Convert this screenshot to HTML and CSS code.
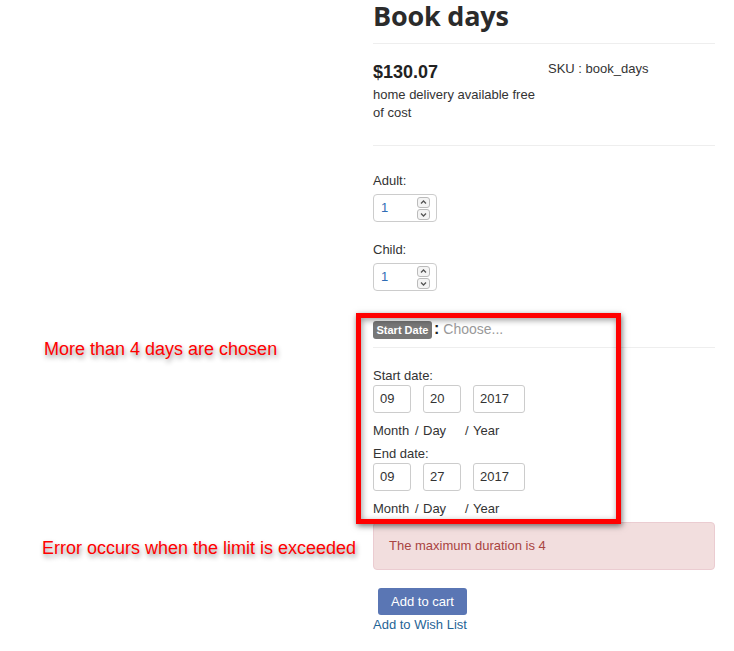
FILE: index.html
```html
<!DOCTYPE html>
<html>
<head>
<meta charset="utf-8">
<link rel="stylesheet" href="styles.css">
</head>
<body>
<div class="page">
  <p class="note note-days">More than 4 days are chosen</p>
  <p class="note note-error">Error occurs when the limit is exceeded</p>

  <main class="product">
    <h1 class="title">Book days</h1>
    <hr class="rule">
    <div class="summary">
      <div class="price-col">
        <div class="price">$130.07</div>
        <div class="delivery">home delivery available free of cost</div>
      </div>
      <div class="sku">SKU : book_days</div>
    </div>
    <hr class="rule rule-2">

    <div class="qty">
      <label class="label">Adult:</label>
      <div class="number">
        <span class="number-value">1</span>
        <span class="spin">
          <span class="spin-btn"><svg viewBox="0 0 13 11" width="13" height="11"><path d="M4 6.5 L6.5 4 L9 6.5" fill="none" stroke="#555" stroke-width="1.3"/></svg></span>
          <span class="spin-btn"><svg viewBox="0 0 13 11" width="13" height="11"><path d="M4 4.5 L6.5 7 L9 4.5" fill="none" stroke="#555" stroke-width="1.3"/></svg></span>
        </span>
      </div>
    </div>
    <div class="qty qty-child">
      <label class="label">Child:</label>
      <div class="number">
        <span class="number-value">1</span>
        <span class="spin">
          <span class="spin-btn"><svg viewBox="0 0 13 11" width="13" height="11"><path d="M4 6.5 L6.5 4 L9 6.5" fill="none" stroke="#555" stroke-width="1.3"/></svg></span>
          <span class="spin-btn"><svg viewBox="0 0 13 11" width="13" height="11"><path d="M4 4.5 L6.5 7 L9 4.5" fill="none" stroke="#555" stroke-width="1.3"/></svg></span>
        </span>
      </div>
    </div>

    <div class="choose-row">
      <span class="badge">Start Date</span><span class="colon">:</span><span class="choose">Choose...</span>
    </div>
    <hr class="rule rule-3">

    <div class="date-block">
      <label class="label">Start date:</label>
      <div class="date-inputs">
        <span class="date-box">09</span>
        <span class="date-box">20</span>
        <span class="date-box date-year">2017</span>
      </div>
      <div class="date-caption"><span class="cap-m">Month</span><span class="cap-s">/</span><span class="cap-d">Day</span><span class="cap-s">/</span><span>Year</span></div>
    </div>
    <div class="date-block date-end">
      <label class="label">End date:</label>
      <div class="date-inputs">
        <span class="date-box">09</span>
        <span class="date-box">27</span>
        <span class="date-box date-year">2017</span>
      </div>
      <div class="date-caption date-caption-end"><span class="cap-m">Month</span><span class="cap-s">/</span><span class="cap-d">Day</span><span class="cap-s">/</span><span>Year</span></div>
    </div>

    <div class="alert">The maximum duration is 4</div>

    <div class="actions">
      <button class="btn-cart">Add to cart</button>
      <a class="wish" href="#">Add to Wish List</a>
    </div>
  </main>

  <div class="highlight"></div>
</div>
</body>
</html>
```

FILE: styles.css
```css
* { box-sizing: border-box; }

html, body {
  margin: 0;
  padding: 0;
  background: #fff;
}

body {
  font-family: "Liberation Sans", Arial, sans-serif;
  font-size: 13px;
  line-height: 18px;
  color: #333;
}

.page {
  position: relative;
  width: 734px;
  height: 651px;
  display: grid;
  grid-template-columns: 373px 342px;
  overflow: hidden;
}

.product {
  grid-column: 2;
}

/* annotations */
.note {
  position: absolute;
  margin: 0;
  font-family: "Liberation Sans", Arial, sans-serif;
  font-size: 18px;
  line-height: 20px;
  color: #ff0000;
  text-shadow: 1px 3px 5px rgba(0, 0, 0, 0.45);
  white-space: nowrap;
}
.note-days { left: 44px; top: 339px; }
.note-error { left: 42px; top: 538px; }

.highlight {
  position: absolute;
  left: 356px;
  top: 313px;
  width: 265px;
  height: 211px;
  border: 5px solid #ff0000;
  box-shadow: 1px 2px 6px rgba(0, 0, 0, 0.55), inset 1px 2px 6px rgba(0, 0, 0, 0.4);
  pointer-events: none;
}

/* header */
.title {
  margin: 0;
  font-family: "Open Sans", "Liberation Sans", sans-serif;
  font-weight: 700;
  font-size: 27px;
  line-height: 32px;
  color: #2b2b2b;
  letter-spacing: -0.2px;
}

.rule {
  margin: 11px 0 0;
  border: 0;
  border-top: 1px solid #eee;
  height: 0;
}

.summary {
  display: grid;
  grid-template-columns: 175px 1fr;
  margin-top: 15px;
}

.price-col { padding-top: 3px; }

.price {
  font-weight: 700;
  font-size: 18px;
  line-height: 20px;
  color: #222;
}

.delivery {
  margin-top: 4px;
  line-height: 17.5px;
  width: 170px;
}

.sku { padding-top: 1px; }

.rule-2 { margin-top: 24px; }

/* quantities */
.qty { margin-top: 26px; }
.qty-child { margin-top: 19px; }

.label {
  display: block;
  line-height: 18px;
}

.number {
  margin-top: 4px;
  width: 64px;
  height: 28px;
  border: 1px solid #ccc;
  border-radius: 4px;
  display: flex;
  align-items: center;
  justify-content: space-between;
  padding: 0 6px 0 7px;
}

.number-value {
  color: #2f6db5;
  font-size: 13px;
}

.spin {
  display: flex;
  flex-direction: column;
  gap: 1px;
}

.spin-btn {
  display: block;
  width: 13px;
  height: 11px;
  border: 1px solid #bbb;
  border-radius: 3px;
  background: #f4f4f4;
}
.spin-btn svg {
  display: block;
  margin: -1px;
}

/* start date choose row */
.choose-row {
  margin-top: 30px;
  display: flex;
  align-items: center;
  height: 18px;
}

.badge {
  display: inline-block;
  background: #777;
  color: #fff;
  font-weight: 700;
  font-size: 11px;
  line-height: 18px;
  height: 18px;
  padding: 0 3.5px;
  border-radius: 3px;
}

.colon {
  color: #222;
  font-size: 16px;
  font-weight: 700;
  margin: -3px 4px 0 2px;
}

.choose {
  color: #999;
  font-size: 14px;
  margin-top: -2px;
}

.rule-3 { margin-top: 8px; }

/* dates */
.date-block { margin-top: 19px; }
.date-end { margin-top: 5px; }

.date-inputs {
  display: flex;
  gap: 12px;
}

.date-box {
  display: block;
  width: 38px;
  height: 28px;
  border: 1px solid #ccc;
  border-radius: 3px;
  padding-left: 6px;
  line-height: 26px;
  font-size: 13px;
  color: #333;
}
.date-year { width: 52px; }

.date-caption {
  display: flex;
  margin-top: 9px;
}
.date-caption-end { margin-top: 9px; }
.cap-m { width: 42px; }
.cap-d { width: 42px; }
.cap-s { width: 8px; }

/* alert */
.alert {
  margin-top: 4px;
  height: 48px;
  padding: 14px 15px;
  background: #f2dede;
  border: 1px solid #ebccd1;
  border-radius: 4px;
  color: #a94442;
}

.actions {
  margin-top: 18px;
  display: flex;
  flex-direction: column;
  align-items: flex-start;
}

.btn-cart {
  margin-left: 5px;
  width: 89px;
  height: 27px;
  border: 0;
  border-radius: 3px;
  background: #5a76b4;
  color: #fff;
  font-family: "Liberation Sans", Arial, sans-serif;
  font-size: 13px;
  padding: 0;
}

.wish {
  margin-top: 1px;
  color: #1f6496;
  text-decoration: none;
  line-height: 18px;
}
```
